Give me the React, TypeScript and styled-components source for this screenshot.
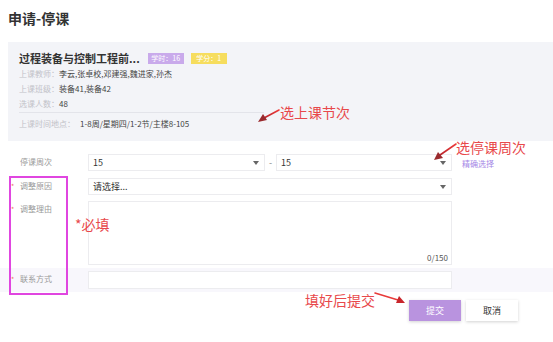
import React from "react";
import styled, {createGlobalStyle} from "styled-components";

const GlobalStyle = createGlobalStyle`
  html, body {
    margin: 0;
    padding: 0;
    background: #fff;
  }
  body {
    font-family: "Noto Sans CJK SC", "Noto Sans", sans-serif;
    color: #333;
  }
  * {
    box-sizing: border-box;
  }
`;

const infoRows = [
  {label: "上课教师", value: "李云,张卓校,邓建强,魏进家,孙杰"},
  {label: "上课班级", value: "装备41,装备42"},
  {label: "选课人数", value: "48"}
];

export default function App() {
  return (
    <>
      <GlobalStyle/>
      <Page>
        <Title>申请-停课</Title>

        <InfoPanel>
          <CourseRow>
            <CourseName>过程装备与控制工程前...</CourseName>
            <Badge $bg="#c9aaeb">学时：16</Badge>
            <Badge $bg="#f6dd5e">学分：1</Badge>
          </CourseRow>
          {infoRows.map(row => (
            <InfoRow key={row.label}>
              <InfoLabel>{row.label}：</InfoLabel>
              <InfoValue>{row.value}</InfoValue>
            </InfoRow>
          ))}
          <InfoRow $divider>
            <InfoLabel>上课时间地点：</InfoLabel>
            <InfoValue $indent>1-8周/星期四/1-2节/主楼8-105</InfoValue>
          </InfoRow>
        </InfoPanel>

        <Form>
          <FormRow>
            <Label><Star/>停课周次</Label>
            <Select $width={177}>15<Caret/></Select>
            <Dash>-</Dash>
            <Select $width={176}>15<Caret/></Select>
            <Link>精确选择</Link>
          </FormRow>

          <FormRow>
            <Label><Star $on/>调整原因</Label>
            <Select $width={364}>请选择...<Caret/></Select>
          </FormRow>

          <FormRow>
            <Label><Star $on/>调整理由</Label>
            <TextArea>
              <Counter>0/150</Counter>
            </TextArea>
          </FormRow>

          <FormRow $highlight>
            <Label><Star $on/>联系方式</Label>
            <Input/>
          </FormRow>

          <Actions>
            <Button $primary>提交</Button>
            <Button>取消</Button>
          </Actions>
        </Form>

        <MarkBox/>
        <Arrows width="553" height="342" viewBox="0 0 553 342">
          <defs>
            <linearGradient id="ar" x1="1" y1="0" x2="0" y2="1">
              <stop offset="0" stopColor="#ee3a3a"/>
              <stop offset="1" stopColor="#b8232a"/>
            </linearGradient>
          </defs>
          <path d="M279 110 L264 118" stroke="url(#ar)" strokeWidth="1.6" strokeLinecap="round"/>
          <path d="M258 122 L263 114 L267 120 Z" fill="#9a2a2e"/>
          <path d="M456 144 L440 155" stroke="url(#ar)" strokeWidth="1.6" strokeLinecap="round"/>
          <path d="M434 160 L438 152 L443 158 Z" fill="#9a2a2e"/>
          <path d="M375 293 L398 300" stroke="#e83a3a" strokeWidth="1.6" strokeLinecap="round"/>
          <path d="M405 303 L396 303 L399 296 Z" fill="#c8262c"/>
        </Arrows>
        <Note $x={280} $y={103}>选上课节次</Note>
        <Note $x={456} $y={138}>选停课周次</Note>
        <Note $x={75} $y={215}>*必填</Note>
        <Note $x={305} $y={291}>填好后提交</Note>
      </Page>
    </>
  );
}

const Page = styled.div`
  position: relative;
  width: 553px;
  height: 342px;
  overflow: hidden;
  padding: 8px 0 0 8px;
`;

const Title = styled.h1`
  margin: 0;
  font-size: 14px;
  line-height: 20px;
  font-weight: 700;
  color: #333;
`;

const InfoPanel = styled.section`
  margin-top: 14px;
  background: #f3f4f8;
  padding: 8px 0 10px 11px;
`;

const CourseRow = styled.div`
  display: flex;
  align-items: center;
  height: 16px;
`;

const CourseName = styled.span`
  font-size: 11px;
  font-weight: 700;
  color: #333;
  margin-right: 8px;
`;

const Badge = styled.span<{ $bg: string }>`
  display: inline-flex;
  align-items: center;
  justify-content: center;
  width: 36px;
  height: 11px;
  margin-right: 7px;
  background: ${({$bg}) => $bg};
  color: #fff;
  font-size: 7px;
`;

const InfoRow = styled.div<{ $divider?: boolean }>`
  display: flex;
  align-items: center;
  font-size: 8px;
  line-height: 15px;
  width: ${({$divider}) => ($divider ? "245px" : "auto")};
  margin-top: ${({$divider}) => ($divider ? "1px" : "0")};
  padding-top: ${({$divider}) => ($divider ? "3px" : "0")};
  border-top: ${({$divider}) => ($divider ? "1px solid #e3e4ea" : "none")};
`;

const InfoLabel = styled.span`
  color: #c2c2c8;
`;

const InfoValue = styled.span<{ $indent?: boolean }>`
  color: #444;
  margin-left: ${({$indent}) => ($indent ? "5px" : "0")};
`;

const Form = styled.div`
  margin-top: 10px;
  margin-left: -8px;
`;

const FormRow = styled.div<{ $highlight?: boolean }>`
  display: flex;
  align-items: flex-start;
  padding: 3px 0 3px 8px;
  background: ${({$highlight}) => ($highlight ? "#f8f7fc" : "transparent")};
`;

const Label = styled.div`
  display: flex;
  align-items: center;
  width: 80px;
  padding-left: 3px;
  font-size: 8px;
  line-height: 16px;
  color: #9a9a9a;
`;

const Star = styled.span<{ $on?: boolean }>`
  width: 9px;
  &::before {
    content: "${({$on}) => ($on ? "*" : "")}";
    color: #f07070;
    font-size: 7px;
  }
`;

const Field = styled.div`
  position: relative;
  background: #fff;
  border: 1px solid #ececef;
  font-size: 9px;
  color: #333;
`;

const Select = styled(Field)<{ $width: number }>`
  display: flex;
  align-items: center;
  width: ${({$width}) => $width}px;
  height: 17px;
  padding: 0 4px;
`;

const Caret = styled.span`
  position: absolute;
  right: 5px;
  top: 6px;
  border-left: 3px solid transparent;
  border-right: 3px solid transparent;
  border-top: 4px solid #666;
`;

const Dash = styled.span`
  width: 11px;
  text-align: center;
  font-size: 9px;
  line-height: 17px;
  color: #888;
`;

const Link = styled.span`
  margin-left: 10px;
  margin-top: 2px;
  font-size: 8px;
  line-height: 16px;
  color: #a587e6;
`;

const TextArea = styled(Field)`
  width: 364px;
  height: 64px;
`;

const Counter = styled.span`
  position: absolute;
  right: 3px;
  bottom: 1px;
  font-size: 8px;
  color: #555;
`;

const Input = styled(Field)`
  width: 364px;
  height: 18px;
`;

const Actions = styled.div`
  display: flex;
  gap: 5px;
  margin: 8px 0 0 409px;
`;

const Button = styled.div<{ $primary?: boolean }>`
  display: flex;
  align-items: center;
  justify-content: center;
  width: 52px;
  height: 21px;
  font-size: 9px;
  background: ${({$primary}) => ($primary ? "#b993df" : "#fff")};
  color: ${({$primary}) => ($primary ? "#fff" : "#333")};
  box-shadow: 0 1px 3px rgba(0, 0, 0, 0.18);
`;

const MarkBox = styled.div`
  position: absolute;
  left: 9px;
  top: 176px;
  width: 59px;
  height: 119px;
  border: 2px solid #e046e0;
  pointer-events: none;
`;

const Arrows = styled.svg`
  position: absolute;
  left: 0;
  top: 0;
  pointer-events: none;
`;

const Note = styled.span<{ $x: number; $y: number }>`
  position: absolute;
  left: ${({$x}) => $x}px;
  top: ${({$y}) => $y}px;
  font-size: 14px;
  line-height: 18px;
  color: #e8484b;
  white-space: nowrap;
`;
